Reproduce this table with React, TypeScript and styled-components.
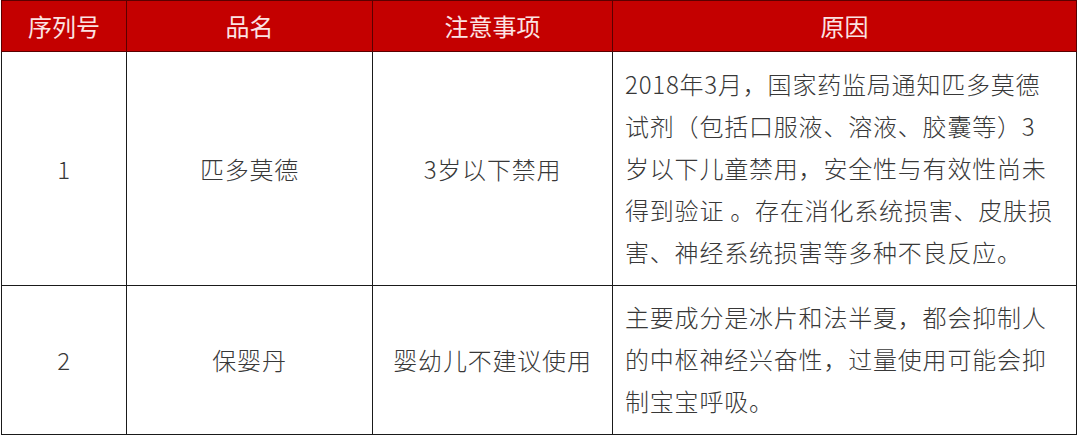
import React from "react";
import styled, { createGlobalStyle } from "styled-components";

const Global = createGlobalStyle`
  html, body { margin: 0; padding: 0; background: #ffffff; }
  body { font-family: "Noto Sans CJK SC", "Noto Sans", sans-serif; }
`;

const Wrap = styled.div`
  padding: 0 4px 0 1px;
`;

const Table = styled.table`
  border-collapse: collapse;
  width: 1075px;
  table-layout: fixed;
  color: #383838;
`;

const HeadCell = styled.th`
  background: #c40000;
  color: #fbe3e3;
  font-weight: 400;
  font-size: 24px;
  height: 50px;
  padding: 0;
  border: 1.5px solid #5a0000;
  text-align: center;
  vertical-align: middle;
  line-height: 1;
`;

const Cell = styled.td<{ $align?: "left" | "center" }>`
  border: 1.5px solid #1a1a1a;
  font-size: 24px;
  font-weight: 300;
  line-height: 42px;
  padding: ${(p) => (p.$align === "left" ? "10px 8px 12px 12px" : "0")};
  text-align: ${(p) => p.$align || "center"};
  vertical-align: middle;
  background: #ffffff;
  letter-spacing: 0.8px;
`;

const Line = styled.span`
  display: block;
  white-space: nowrap;
`;

const rows = [
  {
    no: "1",
    name: "匹多莫德",
    note: "3岁以下禁用",
    reason: [
      "2018年3月，国家药监局通知匹多莫德",
      "试剂（包括口服液、溶液、胶囊等）3",
      "岁以下儿童禁用，安全性与有效性尚未",
      "得到验证 。存在消化系统损害、皮肤损",
      "害、神经系统损害等多种不良反应。",
    ],
    h: 234,
  },
  {
    no: "2",
    name: "保婴丹",
    note: "婴幼儿不建议使用",
    reason: [
      "主要成分是冰片和法半夏，都会抑制人",
      "的中枢神经兴奋性，过量使用可能会抑",
      "制宝宝呼吸。",
    ],
    h: 141,
  },
];

export default function App() {
  return (
    <Wrap>
      <Global />
      <Table>
        <colgroup>
          <col style={{ width: 125 }} />
          <col style={{ width: 246 }} />
          <col style={{ width: 240 }} />
          <col style={{ width: 464 }} />
        </colgroup>
        <thead>
          <tr>
            <HeadCell>序列号</HeadCell>
            <HeadCell>品名</HeadCell>
            <HeadCell>注意事项</HeadCell>
            <HeadCell>原因</HeadCell>
          </tr>
        </thead>
        <tbody>
          {rows.map((r) => (
            <tr key={r.no} style={{ height: r.h }}>
              <Cell>{r.no}</Cell>
              <Cell>{r.name}</Cell>
              <Cell>{r.note}</Cell>
              <Cell $align="left">
                {r.reason.map((l, i) => (
                  <Line key={i}>{l}</Line>
                ))}
              </Cell>
            </tr>
          ))}
        </tbody>
      </Table>
    </Wrap>
  );
}
